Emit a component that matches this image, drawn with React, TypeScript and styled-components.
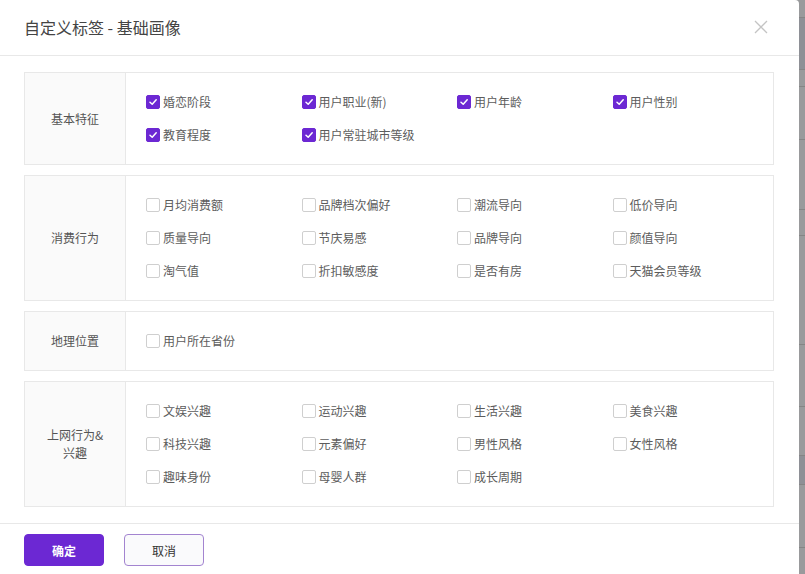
import React from "react";
import styled, { createGlobalStyle } from "styled-components";

const GlobalStyle = createGlobalStyle`
  html, body {
    margin: 0;
    padding: 0;
    background: #999a9c;
    font-family: "Noto Sans CJK SC", "Noto Sans", sans-serif;
  }
`;

type Tag = { name: string; checked?: boolean };
type Group = { title: string; tags: Tag[] };

const groups: Group[] = [
  {
    title: "基本特征",
    tags: [
      { name: "婚恋阶段", checked: true },
      { name: "用户职业(新)", checked: true },
      { name: "用户年龄", checked: true },
      { name: "用户性别", checked: true },
      { name: "教育程度", checked: true },
      { name: "用户常驻城市等级", checked: true },
    ],
  },
  {
    title: "消费行为",
    tags: [
      { name: "月均消费额" },
      { name: "品牌档次偏好" },
      { name: "潮流导向" },
      { name: "低价导向" },
      { name: "质量导向" },
      { name: "节庆易感" },
      { name: "品牌导向" },
      { name: "颜值导向" },
      { name: "淘气值" },
      { name: "折扣敏感度" },
      { name: "是否有房" },
      { name: "天猫会员等级" },
    ],
  },
  {
    title: "地理位置",
    tags: [{ name: "用户所在省份" }],
  },
  {
    title: "上网行为&兴趣",
    tags: [
      { name: "文娱兴趣" },
      { name: "运动兴趣" },
      { name: "生活兴趣" },
      { name: "美食兴趣" },
      { name: "科技兴趣" },
      { name: "元素偏好" },
      { name: "男性风格" },
      { name: "女性风格" },
      { name: "趣味身份" },
      { name: "母婴人群" },
      { name: "成长周期" },
    ],
  },
];

// stripes of the dimmed page showing at the right edge
const backdropRows = [17, 51, 16, 52, 69, 25, 108, 61, 48, 28, 62, 37];

const App = () => {
  return (
    <>
      <GlobalStyle />
      <Screen>
        <Modal>
          <Header>
            <Title>自定义标签 - 基础画像</Title>
            <Close aria-label="close">
              <svg width="14" height="14" viewBox="0 0 14 14">
                <path
                  d="M1 1 L13 13 M13 1 L1 13"
                  stroke="#c4c4c4"
                  strokeWidth="1.3"
                  fill="none"
                />
              </svg>
            </Close>
          </Header>
          <Body>
            {groups.map((group) => (
              <Section key={group.title}>
                <Label>{group.title}</Label>
                <TagGrid>
                  {group.tags.map((tag) => (
                    <TagItem key={tag.name}>
                      <Box $checked={!!tag.checked}>
                        {tag.checked && (
                          <svg width="10" height="10" viewBox="0 0 10 10">
                            <path
                              d="M2 5.2 L4.2 7.2 L8.2 2.8"
                              stroke="#fff"
                              strokeWidth="1.5"
                              fill="none"
                              strokeLinecap="round"
                              strokeLinejoin="round"
                            />
                          </svg>
                        )}
                      </Box>
                      <TagName>{tag.name}</TagName>
                    </TagItem>
                  ))}
                </TagGrid>
              </Section>
            ))}
          </Body>
          <Footer>
            <Button $primary>确定</Button>
            <Button>取消</Button>
          </Footer>
        </Modal>
        <Backdrop>
          {backdropRows.map((h, i) => (
            <BackdropRow key={i} $h={h} $dark={i === 1 || i === 9} />
          ))}
        </Backdrop>
      </Screen>
    </>
  );
};

export default App;

const Screen = styled.div`
  display: flex;
  width: 805px;
  height: 574px;
  overflow: hidden;
`;

const Modal = styled.div`
  width: 799px;
  flex-shrink: 0;
  background: #fff;
  border-top-right-radius: 4px;
  display: flex;
  flex-direction: column;

  & > * {
    flex-shrink: 0;
  }
`;

const Header = styled.div`
  height: 55px;
  border-bottom: 1px solid #e8e8e8;
  display: flex;
  align-items: center;
  justify-content: space-between;
  padding: 0 31px 0 24px;
`;

const Title = styled.h1`
  margin: 0;
  font-size: 16px;
  font-weight: 400;
  color: #444;
  line-height: 24px;
  margin-top: -2px;
`;

const Close = styled.button`
  border: none;
  background: none;
  padding: 0;
  display: flex;
  cursor: pointer;
  margin-top: -1px;
`;

const Body = styled.div`
  padding: 16px 25px 16px 24px;
  display: flex;
  flex-direction: column;
  gap: 10px;
  border-bottom: 1px solid #e8e8e8;
`;

const Section = styled.div`
  display: flex;
  border: 1px solid #e8e8e8;
`;

const Label = styled.div`
  width: 64px;
  flex-shrink: 0;
  padding: 0 18px;
  background: #fafafa;
  border-right: 1px solid #e8e8e8;
  display: flex;
  align-items: center;
  justify-content: center;
  text-align: center;
  font-size: 12px;
  line-height: 18px;
  color: #555;
`;

const TagGrid = styled.div`
  flex: 1;
  display: grid;
  grid-template-columns: repeat(4, 155.5px);
  grid-auto-rows: 33px;
  padding: 12px 0 13px 20px;
`;

const TagItem = styled.label`
  display: flex;
  align-items: center;
  gap: 3px;
  cursor: pointer;
`;

const Box = styled.span<{ $checked: boolean }>`
  width: 14px;
  height: 14px;
  box-sizing: border-box;
  border-radius: 2px;
  display: flex;
  align-items: center;
  justify-content: center;
  background: ${(p) => (p.$checked ? "#6c28d3" : "#fff")};
  border: 1px solid ${(p) => (p.$checked ? "#6c28d3" : "#cfcfcf")};
`;

const TagName = styled.span`
  font-size: 12px;
  color: #5c5c5c;
  line-height: 18px;
`;

const Footer = styled.div`
  display: flex;
  gap: 20px;
  padding: 10px 24px;
`;

const Button = styled.button<{ $primary?: boolean }>`
  width: 80px;
  height: 32px;
  border-radius: 4px;
  font-family: "Noto Sans CJK SC", "Noto Sans", sans-serif;
  font-size: 12px;
  cursor: pointer;
  background: ${(p) => (p.$primary ? "#6c28d3" : "#fafafc")};
  color: ${(p) => (p.$primary ? "#fff" : "#333")};
  border: 1px solid ${(p) => (p.$primary ? "#6c28d3" : "#a384d0")};
  font-weight: ${(p) => (p.$primary ? 700 : 400)};
`;

const Backdrop = styled.div`
  flex: 1;
  display: flex;
  flex-direction: column;
  background: #999a9c;
`;

const BackdropRow = styled.div<{ $h: number; $dark: boolean }>`
  height: ${(p) => p.$h}px;
  flex-shrink: 0;
  border-bottom: 1px solid #858585;
  background: ${(p) => (p.$dark ? "#8e9096" : "#999a9c")};
`;
